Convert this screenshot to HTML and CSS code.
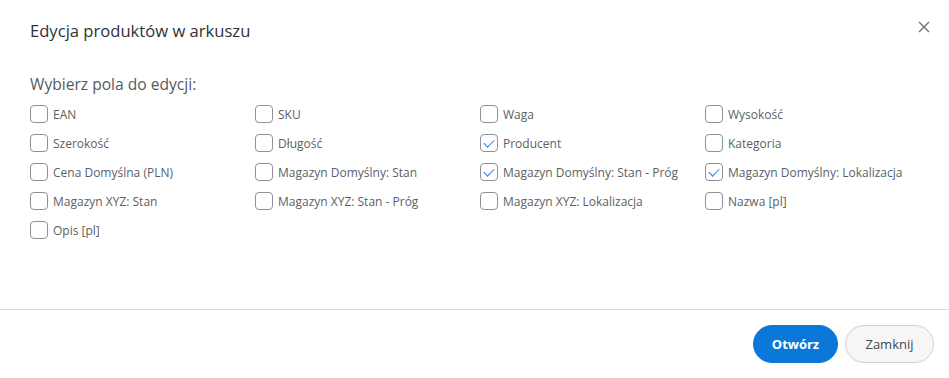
FILE: index.html
```html
<!DOCTYPE html>
<html lang="pl">
<head>
    <meta charset="UTF-8">
    <meta name="viewport" content="width=device-width, initial-scale=1.0">
    <title>Edycja produktów w arkuszu</title>
    <link rel="stylesheet" href="styles.css">
</head>
<body>
    <div class="modal">
        <div class="modal-header">
            <h1 class="modal-title">Edycja produktów w arkuszu</h1>
            <button class="close" aria-label="Zamknij">
                <svg width="12" height="12" viewBox="0 0 12 12"><path d="M1 1L11 11M11 1L1 11" stroke="#6b6f76" stroke-width="1.4" fill="none"/></svg>
            </button>
        </div>
        <div class="modal-body">
            <div class="fields-label">Wybierz pola do edycji:</div>
            <div class="fields">
                <label class="field"><input type="checkbox"><span class="box"></span>EAN</label>
                <label class="field"><input type="checkbox"><span class="box"></span>SKU</label>
                <label class="field"><input type="checkbox"><span class="box"></span>Waga</label>
                <label class="field"><input type="checkbox"><span class="box"></span>Wysokość</label>

                <label class="field"><input type="checkbox"><span class="box"></span>Szerokość</label>
                <label class="field"><input type="checkbox"><span class="box"></span>Długość</label>
                <label class="field"><input type="checkbox" checked><span class="box"></span>Producent</label>
                <label class="field"><input type="checkbox"><span class="box"></span>Kategoria</label>

                <label class="field"><input type="checkbox"><span class="box"></span>Cena Domyślna (PLN)</label>
                <label class="field"><input type="checkbox"><span class="box"></span>Magazyn Domyślny: Stan</label>
                <label class="field"><input type="checkbox" checked><span class="box"></span>Magazyn Domyślny: Stan - Próg</label>
                <label class="field"><input type="checkbox" checked><span class="box"></span>Magazyn Domyślny: Lokalizacja</label>

                <label class="field"><input type="checkbox"><span class="box"></span>Magazyn XYZ: Stan</label>
                <label class="field"><input type="checkbox"><span class="box"></span>Magazyn XYZ: Stan - Próg</label>
                <label class="field"><input type="checkbox"><span class="box"></span>Magazyn XYZ: Lokalizacja</label>
                <label class="field"><input type="checkbox"><span class="box"></span>Nazwa [pl]</label>

                <label class="field"><input type="checkbox"><span class="box"></span>Opis [pl]</label>
            </div>
        </div>
        <div class="modal-footer">
            <button class="btn btn-primary">Otwórz</button>
            <button class="btn btn-default">Zamknij</button>
        </div>
    </div>
</body>
</html>
```

FILE: styles.css
```css
* {
    box-sizing: border-box;
    font-family: 'Open Sans', 'Noto Sans', sans-serif;
}

body {
    margin: 0;
    background: #fff;
}

.modal {
    height: 100vh;
    display: flex;
    flex-direction: column;
    background: #fff;
}

.modal-header {
    position: relative;
    padding: 20px 30px 0;
    height: 62px;
}

.modal-title {
    margin: 0;
    font-size: 16.6px;
    line-height: 22px;
    font-weight: 400;
    color: #2f3237;
}

.close {
    position: absolute;
    top: 20px;
    right: 18px;
    width: 14px;
    height: 14px;
    padding: 0;
    border: none;
    background: none;
    cursor: pointer;
    display: flex;
    align-items: center;
    justify-content: center;
}

.modal-body {
    flex: 1;
    padding: 12px 30px 0;
}

.fields-label {
    font-size: 15.6px;
    line-height: 20px;
    color: #555a60;
    margin-bottom: 11px;
}

.fields {
    display: grid;
    grid-template-columns: repeat(4, 225px);
    row-gap: 11px;
}

.field {
    display: flex;
    align-items: center;
    height: 18px;
    font-size: 12px;
    color: #5b5f65;
    cursor: pointer;
    white-space: nowrap;
}

.field input {
    display: none;
}

.box {
    width: 18px;
    height: 18px;
    border: 1px solid #8e9297;
    border-radius: 4px;
    margin-right: 5px;
    flex-shrink: 0;
    position: relative;
}

.field input:checked + .box::after {
    content: '';
    position: absolute;
    left: 5px;
    top: 2px;
    width: 5px;
    height: 9px;
    border: solid #2f80e0;
    border-width: 0 1.5px 1.5px 0;
    transform: rotate(45deg);
}

.modal-footer {
    border-top: 1px solid #d9d9d9;
    display: flex;
    justify-content: flex-end;
    gap: 7px;
    padding: 15px 15px 0;
    height: 69px;
}

.btn {
    height: 38px;
    border-radius: 19px;
    font-size: 13px;
    cursor: pointer;
    padding: 0;
}

.btn-primary {
    width: 85px;
    background: #0a78d8;
    border: 1px solid #0a78d8;
    color: #fff;
    font-weight: 700;
}

.btn-default {
    width: 89px;
    background: #f6f6f7;
    border: 1px solid #cfd1d4;
    color: #44484e;
}
```
